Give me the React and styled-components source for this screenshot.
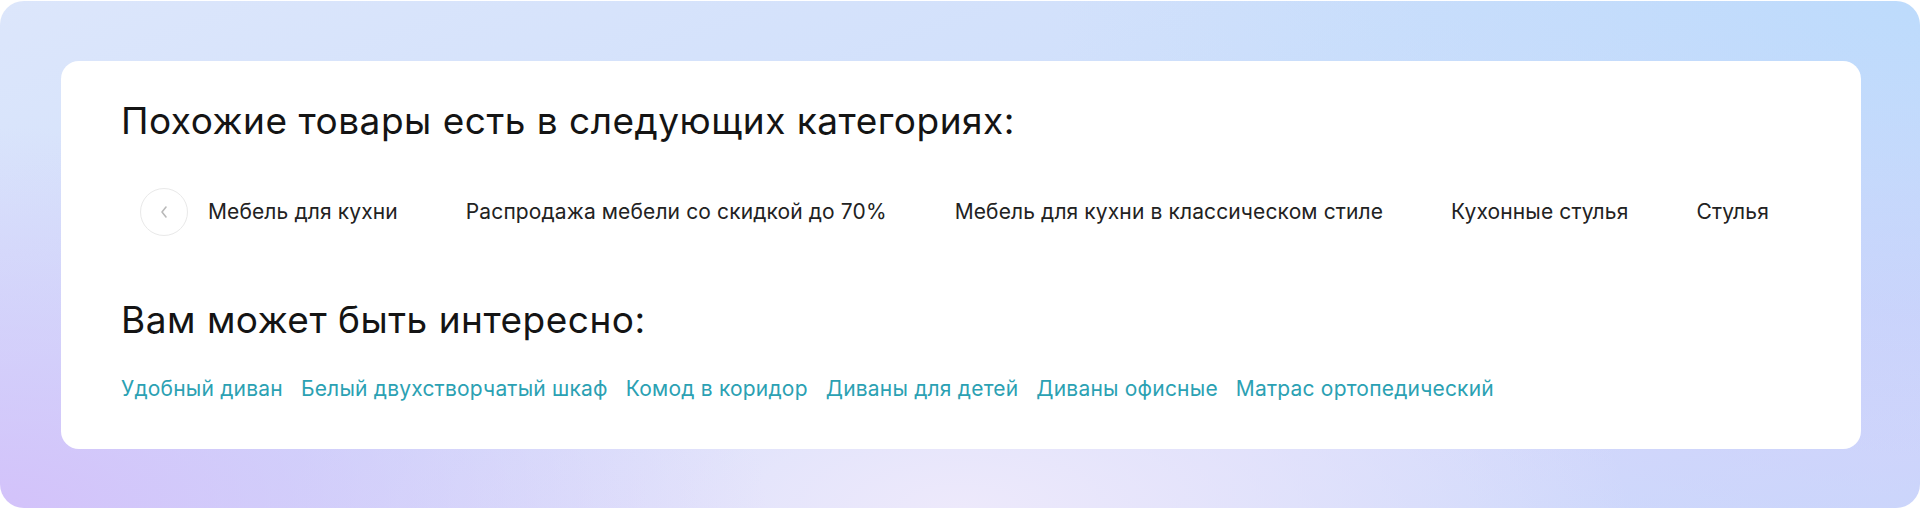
import React from "react";
import styled, { createGlobalStyle } from "styled-components";

const GlobalStyle = createGlobalStyle`
  body {
    margin: 0;
    background: #ffffff;
    font-family: Inter, "Liberation Sans", Arial, sans-serif;
  }
`;

const Frame = styled.div`
  box-sizing: border-box;
  width: 1920px;
  height: 507px;
  margin-top: 1px;
  padding: 60px 59px 59px 61px;
  border-radius: 24px;
  background:
    radial-gradient(ellipse 40% 75% at 0% 100%, #d3c2fa 0%, rgba(211, 194, 250, 0) 100%),
    radial-gradient(ellipse 45% 90% at 100% 0%, #bddbfc 0%, rgba(189, 219, 252, 0) 100%),
    radial-gradient(ellipse 35% 55% at 50% 100%, #ede9fb 0%, rgba(237, 233, 251, 0) 100%),
    radial-gradient(ellipse 30% 60% at 100% 60%, #cfd0fb 0%, rgba(207, 208, 251, 0) 100%),
    linear-gradient(160deg, #dce6fb 0%, #cfdffb 45%, #d6dafb 75%, #c9d8fb 100%);
`;

const Card = styled.section`
  box-sizing: border-box;
  height: 388px;
  padding: 39px 60px 0 60px;
  background: #ffffff;
  border-radius: 18px;
`;

const Heading = styled.h2`
  margin: ${(p) => p.$top || 0}px 0 0;
  font-size: 37px;
  line-height: 42px;
  font-weight: 400;
  color: #141414;
  letter-spacing: 0.5px;
`;

const Carousel = styled.div`
  display: flex;
  align-items: center;
  gap: 20px;
  margin: 46px 0 0 19px;
  height: 48px;
`;

const ArrowButton = styled.button`
  flex: none;
  width: 48px;
  height: 48px;
  padding: 0;
  border: 1.5px solid #e9e9e9;
  border-radius: 50%;
  background: #ffffff;
  display: flex;
  align-items: center;
  justify-content: center;
  cursor: pointer;
`;

const Categories = styled.div`
  display: flex;
  align-items: center;
  gap: 68px;
`;

const Category = styled.a`
  font-size: 21px;
  line-height: 26px;
  color: #222222;
  text-decoration: none;
  white-space: nowrap;
  letter-spacing: 0.12px;
`;

const Links = styled.div`
  display: flex;
  gap: 18px;
  margin-top: 36px;
`;

const TagLink = styled.a`
  font-size: 21px;
  line-height: 24px;
  color: #2ba1b3;
  text-decoration: none;
  white-space: nowrap;
  letter-spacing: 0.2px;
`;

const categories = [
  "Мебель для кухни",
  "Распродажа мебели со скидкой до 70%",
  "Мебель для кухни в классическом стиле",
  "Кухонные стулья",
  "Стулья",
];

const interests = [
  "Удобный диван",
  "Белый двухстворчатый шкаф",
  "Комод в коридор",
  "Диваны для детей",
  "Диваны офисные",
  "Матрас ортопедический",
];

const ChevronLeft = () => (
  <svg width="10" height="16" viewBox="0 0 10 16" fill="none">
    <path d="M7 3L3 8l4 5" stroke="#b9b9b9" strokeWidth="1.6" strokeLinecap="round" strokeLinejoin="round" />
  </svg>
);

const App = () => {
  return (
    <>
      <GlobalStyle />
      <Frame>
        <Card>
          <Heading>Похожие товары есть в следующих категориях:</Heading>
          <Carousel>
            <ArrowButton aria-label="Назад">
              <ChevronLeft />
            </ArrowButton>
            <Categories>
              {categories.map((c) => (
                <Category href="#" key={c}>
                  {c}
                </Category>
              ))}
            </Categories>
          </Carousel>
          <Heading $top={63}>Вам может быть интересно:</Heading>
          <Links>
            {interests.map((t) => (
              <TagLink href="#" key={t}>
                {t}
              </TagLink>
            ))}
          </Links>
        </Card>
      </Frame>
    </>
  );
};

export default App;
